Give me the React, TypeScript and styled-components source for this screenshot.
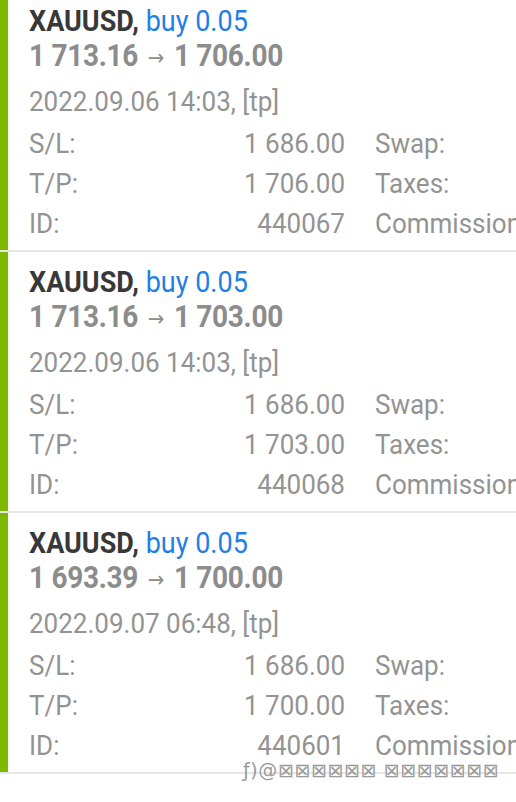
import React from 'react';
import styled, { createGlobalStyle } from 'styled-components';

const GlobalStyle = createGlobalStyle`
  html, body {
    margin: 0;
    padding: 0;
    background: #ffffff;
    overflow: hidden;
  }
  body {
    font-family: Roboto, "Noto Sans", "DejaVu Sans", sans-serif;
  }
`;

const Page = styled.div`
  position: relative;
  width: 516px;
  height: 802px;
  overflow: hidden;
  background: #ffffff;
`;

const List = styled.div`
  margin-top: -9px;
`;

const Card = styled.div`
  display: flex;
  border-bottom: 2px solid #e6e6e6;
`;

const Bar = styled.div<{ color: string }>`
  width: 8px;
  flex: none;
  background: ${p => p.color};
`;

const Content = styled.div`
  flex: 1;
  padding: 12px 0 7px 21px;
  white-space: nowrap;
  min-width: 0;
  overflow: hidden;
`;

const Title = styled.div`
  height: 36px;
  font-size: 27px;
  line-height: 36px;
  color: #383838;
  transform: scaleY(1.06);
`;

const Symbol = styled.span`
  font-weight: 700;
`;

const Side = styled.span`
  color: #1f7fe6;
`;

const Prices = styled.div`
  height: 34px;
  font-size: 28px;
  line-height: 34px;
  font-weight: 700;
  color: #8c8c8c;
  letter-spacing: -0.3px;
  transform: scaleY(1.1);
`;

const Arrow = styled.span`
  font-family: "DejaVu Sans", sans-serif;
  font-weight: 400;
  font-size: 20px;
  line-height: 0;
  padding: 0 3px;
  position: relative;
  top: -1px;
`;

const Time = styled.div`
  height: 40px;
  margin-top: 8px;
  font-size: 26px;
  line-height: 40px;
  color: #939393;
  transform: scaleY(1.06);
`;

const Details = styled.div`
  margin-top: 2px;
  display: grid;
  grid-template-columns: 120px 196px auto;
  grid-auto-rows: 40px;
  align-items: center;
  font-size: 26px;
  line-height: 30px;
  color: #939393;
`;

const Label = styled.span`
  transform: scaleY(1.06);
`;

const Value = styled(Label)`
  text-align: right;
`;

const Extra = styled(Label)`
  padding-left: 30px;
`;

const Watermark = styled.div`
  position: absolute;
  left: 243px;
  top: 759px;
  font-family: "DejaVu Sans", sans-serif;
  font-size: 19px;
  line-height: 22px;
  color: #9a9a9a;
  letter-spacing: 0.6px;
  white-space: nowrap;
`;

interface Trade {
  symbol: string;
  side: string;
  open: string;
  close: string;
  time: string;
  sl: string;
  tp: string;
  id: string;
}

const trades: Trade[] = [
  {
    symbol: 'XAUUSD',
    side: 'buy 0.05',
    open: '1 713.16',
    close: '1 706.00',
    time: '2022.09.06 14:03, [tp]',
    sl: '1 686.00',
    tp: '1 706.00',
    id: '440067',
  },
  {
    symbol: 'XAUUSD',
    side: 'buy 0.05',
    open: '1 713.16',
    close: '1 703.00',
    time: '2022.09.06 14:03, [tp]',
    sl: '1 686.00',
    tp: '1 703.00',
    id: '440068',
  },
  {
    symbol: 'XAUUSD',
    side: 'buy 0.05',
    open: '1 693.39',
    close: '1 700.00',
    time: '2022.09.07 06:48, [tp]',
    sl: '1 686.00',
    tp: '1 700.00',
    id: '440601',
  },
];

const TradeCard = ({ trade }: { trade: Trade }) => (
  <Card>
    <Bar color="#7db700" />
    <Content>
      <Title>
        <Symbol>{trade.symbol},</Symbol> <Side>{trade.side}</Side>
      </Title>
      <Prices>
        {trade.open} <Arrow>→</Arrow> {trade.close}
      </Prices>
      <Time>{trade.time}</Time>
      <Details>
        <Label>S/L:</Label>
        <Value>{trade.sl}</Value>
        <Extra>Swap:</Extra>
        <Label>T/P:</Label>
        <Value>{trade.tp}</Value>
        <Extra>Taxes:</Extra>
        <Label>ID:</Label>
        <Value>{trade.id}</Value>
        <Extra>Commission:</Extra>
      </Details>
    </Content>
  </Card>
);

const App = () => (
  <Page>
    <GlobalStyle />
    <List>
      {trades.map(t => (
        <TradeCard key={t.id} trade={t} />
      ))}
    </List>
    <Watermark>ƒ)@⊠⊠⊠⊠⊠⊠ ⊠⊠⊠⊠⊠⊠⊠</Watermark>
  </Page>
);

export default App;
